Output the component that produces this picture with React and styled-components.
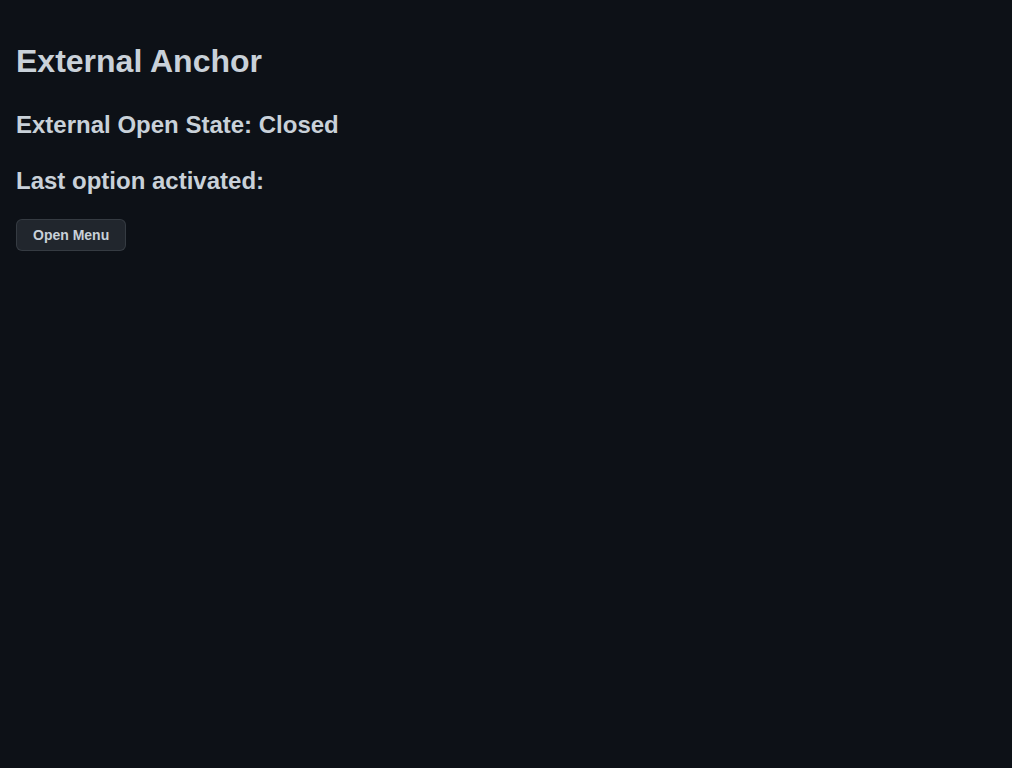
import React from "react";
import styled, { createGlobalStyle } from "styled-components";

const Global = createGlobalStyle`
  html, body {
    margin: 0;
    padding: 0;
    background: #0d1117;
    color: #c9d1d9;
    font-family: "Liberation Sans", Arial, sans-serif;
    font-size: 14px;
    line-height: 1.5;
  }
  body { min-height: 100vh; }
`;

const Page = styled.div`
  padding: 16px;
  display: flow-root;
`;

const Title = styled.h1`
  font-size: 32px;
  font-weight: 600;
  margin: 21.44px 0;
  line-height: 1.5;
`;

const Heading = styled.h2`
  font-size: 24px;
  font-weight: 600;
  margin: 19.92px 0;
  line-height: 1.5;
`;

const Button = styled.button`
  display: inline-flex;
  align-items: center;
  justify-content: center;
  height: 32px;
  padding: 0 16px;
  font-family: inherit;
  font-size: 14px;
  font-weight: 600;
  color: #c9d1d9;
  background: #21262d;
  border: 1px solid rgba(240, 246, 252, 0.1);
  border-radius: 6px;
  cursor: pointer;
`;

export default function App() {
  return (
    <>
      <Global />
      <Page>
        <Title>External Anchor</Title>
        <Heading>External Open State: Closed</Heading>
        <Heading>Last option activated: </Heading>
        <Button>Open Menu</Button>
      </Page>
    </>
  );
}
